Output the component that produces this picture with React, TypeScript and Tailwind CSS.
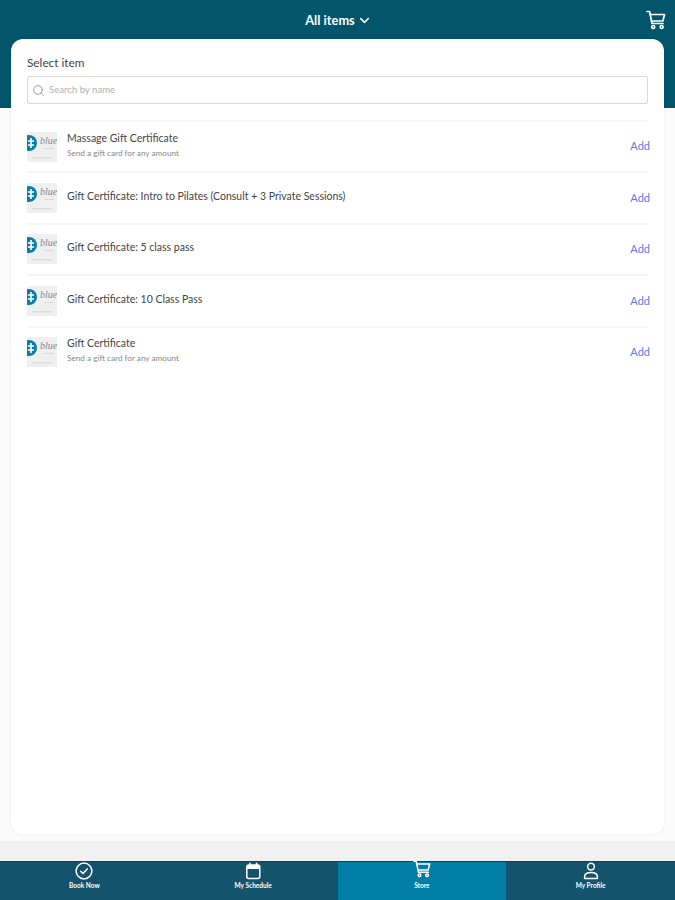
import { ChevronDown, Search } from "lucide-react";
import React from "react";

interface Item {
  title: string;
  subtitle?: string;
}

const items: Item[] = [
  { title: "Massage Gift Certificate", subtitle: "Send a gift card for any amount" },
  { title: "Gift Certificate: Intro to Pilates (Consult + 3 Private Sessions)" },
  { title: "Gift Certificate: 5 class pass" },
  { title: "Gift Certificate: 10 Class Pass" },
  { title: "Gift Certificate", subtitle: "Send a gift card for any amount" },
];

const CartIcon: React.FC<{ size: number }> = ({ size }) => (
  <svg width={size} height={size} viewBox="0 0 20 20" fill="none" stroke="currentColor" strokeWidth="1.7" strokeLinejoin="round" strokeLinecap="round">
    <path d="M1 1.5h2.6L6 13.5h11" />
    <path d="M4 4.5h14.5l-1.6 6.5H5.4" />
    <circle cx="7.2" cy="17" r="1.5" />
    <circle cx="15.6" cy="17" r="1.5" />
  </svg>
);

const CheckIcon = () => (
  <svg width="18" height="18" viewBox="0 0 18 18" fill="none" stroke="currentColor" strokeLinecap="round" strokeLinejoin="round">
    <circle cx="9" cy="9" r="7.9" strokeWidth="1.5" />
    <path d="M5.8 9.4l2.2 2.1 4.2-4.6" strokeWidth="1.5" />
  </svg>
);

const CalendarIcon = () => (
  <svg width="18" height="18" viewBox="0 0 18 18" fill="none">
    <rect x="2.8" y="3" width="13" height="13.6" rx="2" stroke="currentColor" strokeWidth="1.5" />
    <path d="M2.8 5a2 2 0 0 1 2-2h9a2 2 0 0 1 2 2v2H2.8z" fill="currentColor" />
    <path d="M6 1.2v3M12.6 1.2v3" stroke="currentColor" strokeWidth="1.6" strokeLinecap="round" />
  </svg>
);

const ProfileIcon = () => (
  <svg width="18" height="18" viewBox="0 0 18 18" fill="none" stroke="currentColor" strokeWidth="1.5" strokeLinejoin="round">
    <circle cx="9" cy="4.6" r="3.4" />
    <path d="M2.6 16.6v-1.8c0-2.6 2.6-4.3 6.4-4.3s6.4 1.7 6.4 4.3v1.8z" />
  </svg>
);

const tabs = [
  { label: "Book Now", icon: <CheckIcon /> },
  { label: "My Schedule", icon: <CalendarIcon /> },
  { label: "Store", icon: <div className="-mt-[2px] mb-[2px]"><CartIcon size={18} /></div>, active: true },
  { label: "My Profile", icon: <ProfileIcon /> },
];

// studio logo thumbnail
const Logo = () => (
  <svg width="30" height="30" viewBox="0 0 30 30" className="shrink-0">
    <rect width="30" height="30" fill="#efefef" />
    <circle cx="2" cy="11" r="8" fill="#0b7ea6" />
    <path d="M4 6v10M1 9h6M1 13h6" stroke="#fff" strokeWidth="1.6" />
    <text x="13" y="12" fontSize="10" fontStyle="italic" fontFamily="Liberation Serif, serif" fill="#8a8a8a">blue</text>
    <rect x="17" y="16" width="10" height="1" fill="#d8d8d8" />
    <rect x="5" y="25" width="20" height="1.5" fill="#dcdcdc" />
  </svg>
);

const Row: React.FC<{ item: Item }> = ({ item }) => (
  <div className="flex h-[51.4px] items-center border-t-2 border-[#f6f6f6]">
    <Logo />
    <div className="ml-[10px] min-w-0 flex-1 pb-[4px]">
      <p className="text-[10.5px] leading-[14px] text-[#444]">{item.title}</p>
      {item.subtitle && <p className="mt-[2px] text-[8.2px] leading-[12px] text-[#888]">{item.subtitle}</p>}
    </div>
    <span className="-mr-[2px] text-[11px] text-[#5f78e6]">Add</span>
  </div>
);

export default function App() {
  return (
    <div className="flex h-[900px] flex-col bg-[#fbfbfb] font-['Lato',sans-serif]">
      <header className="relative flex h-[108px] shrink-0 justify-center bg-[#02556a] pt-[12px]">
        <div className="flex h-[17px] items-center gap-[2px] pl-[2px] text-white">
          <span className="text-[12.8px] font-bold">All items</span>
          <ChevronDown size={15} strokeWidth={2.4} />
        </div>
        <div className="absolute right-[9px] top-[10px] text-white">
          <CartIcon size={20} />
        </div>
      </header>

      <main className="relative mx-[11px] -mt-[69px] flex h-[795px] shrink-0 flex-col rounded-xl bg-white px-[16px] pt-[17px] shadow-[0_0_4px_rgba(0,0,0,0.06)]">
        <label className="text-[11.8px] leading-[14px] text-[#444]">Select item</label>
        <div className="mt-[6px] flex h-[28px] items-center gap-[4px] rounded-[2px] border border-[#d9d9d9] pl-[4px] pr-2">
          <Search size={13} strokeWidth={1.5} className="text-[#888]" />
          <span className="text-[9.6px] text-[#b0b0b0]">Search by name</span>
        </div>
        <div className="mt-[16px]">
          {items.map((item) => (
            <Row key={item.title} item={item} />
          ))}
        </div>
      </main>

      <div className="mt-[7px] h-[20px] shrink-0 bg-[#f1f1f1]" />

      <nav className="grid h-[39px] shrink-0 grid-cols-4 border-t border-[#0d4459] bg-[#14536c]">
        {tabs.map((tab) => (
          <div key={tab.label} className={`flex flex-col items-center text-white ${tab.active ? "bg-[#007ea6]" : ""}`}>
            {tab.icon}
            <span className="mt-[2px] text-[6.5px] font-bold leading-[8px]">{tab.label}</span>
          </div>
        ))}
      </nav>
    </div>
  );
}
